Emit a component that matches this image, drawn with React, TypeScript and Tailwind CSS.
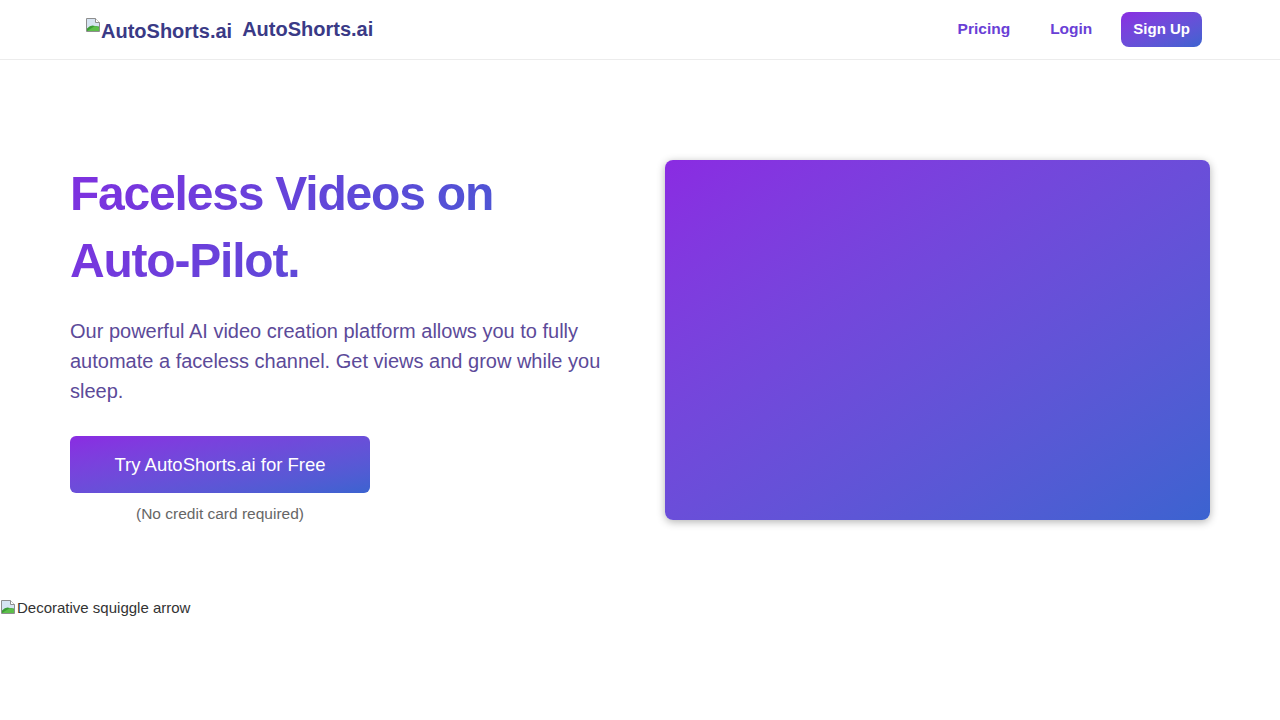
import React from 'react';

const BrokenImage: React.FC = () => (
  <svg width="16" height="16" viewBox="0 0 16 16" className="block shrink-0">
    <path d="M1.5 1.5h9l4 4v9h-13z" fill="#d6e4f2" stroke="#8e8e8e" />
    <path d="M10.5 1.5v4h4" fill="#ffffff" stroke="#8e8e8e" />
    <path d="M2 14L2 11.5Q6 7 10 9L14 9.5L14 14z" fill="#3b9c36" />
    <path d="M2 14L10 9L14 10.5L14 14z" fill="#5cbf4a" />
  </svg>
);

const App: React.FC = () => {
  return (
    <div className="min-h-screen bg-white" style={{ fontFamily: '"Liberation Sans", Arial, sans-serif' }}>
      {/* Header */}
      <header className="h-[60px] border-b border-[#ececec] flex items-center justify-between pl-[85px] pr-[78px]">
        <div className="flex items-center gap-[10px]">
          <span className="flex items-start text-[20px] font-bold text-[#3a3a86] leading-none">
            <span className="relative top-[-3px]">
              <BrokenImage />
            </span>
            <span className="relative top-[1px]">AutoShorts.ai</span>
          </span>
          <span className="relative top-[-1px] text-[20px] font-bold text-[#3a3a86] leading-none">AutoShorts.ai</span>
        </div>
        <nav className="flex items-center">
          <a className="relative top-[-1px] text-[15.5px] font-bold text-[#6a3fd6]">Pricing</a>
          <a className="relative top-[-1px] ml-[40px] text-[15.5px] font-bold text-[#6a3fd6]">Login</a>
          <a className="ml-[29px] h-[35px] px-3 flex items-center rounded-lg text-[15px] font-bold text-white bg-gradient-to-br from-[#8a2be2] to-[#3b63d0]">
            Sign Up
          </a>
        </nav>
      </header>

      {/* Hero */}
      <section className="px-[70px] pt-[100px] pb-[71px]">
        <div className="grid grid-cols-2 gap-[50px] items-start">
          <div>
            <h1 className="text-[48px] font-bold leading-[1.4] tracking-tight bg-[linear-gradient(125deg,#8030e0,#3b63d0)] bg-clip-text text-transparent">
              Faceless Videos on
              <br />
              Auto-Pilot.
            </h1>
            <p className="mt-[22px] text-[20px] leading-[30px] text-[#5c4a99]">
              Our powerful AI video creation platform allows you to fully automate a faceless channel. Get views and grow while you sleep.
            </p>
            <div className="mt-[30px] w-[300px] flex flex-col items-center">
              <button className="w-[300px] h-[57px] rounded-md bg-gradient-to-br from-[#8a2be2] to-[#3b63d0] text-white text-[18.5px]">
                Try AutoShorts.ai for Free
              </button>
              <span className="mt-[9px] text-[15.5px] text-[#666666]">(No credit card required)</span>
            </div>
          </div>
          <div className="h-[360px] rounded-lg shadow-[0_2px_8px_rgba(0,0,0,0.3)] bg-gradient-to-br from-[#8a2be2] to-[#3b63d0]" />
        </div>
      </section>

      <div className="mt-[2px] flex items-start text-[15px] text-[#333333] leading-[18px]">
        <BrokenImage />
        <span className="ml-px">Decorative squiggle arrow</span>
      </div>
    </div>
  );
};

export default App;
